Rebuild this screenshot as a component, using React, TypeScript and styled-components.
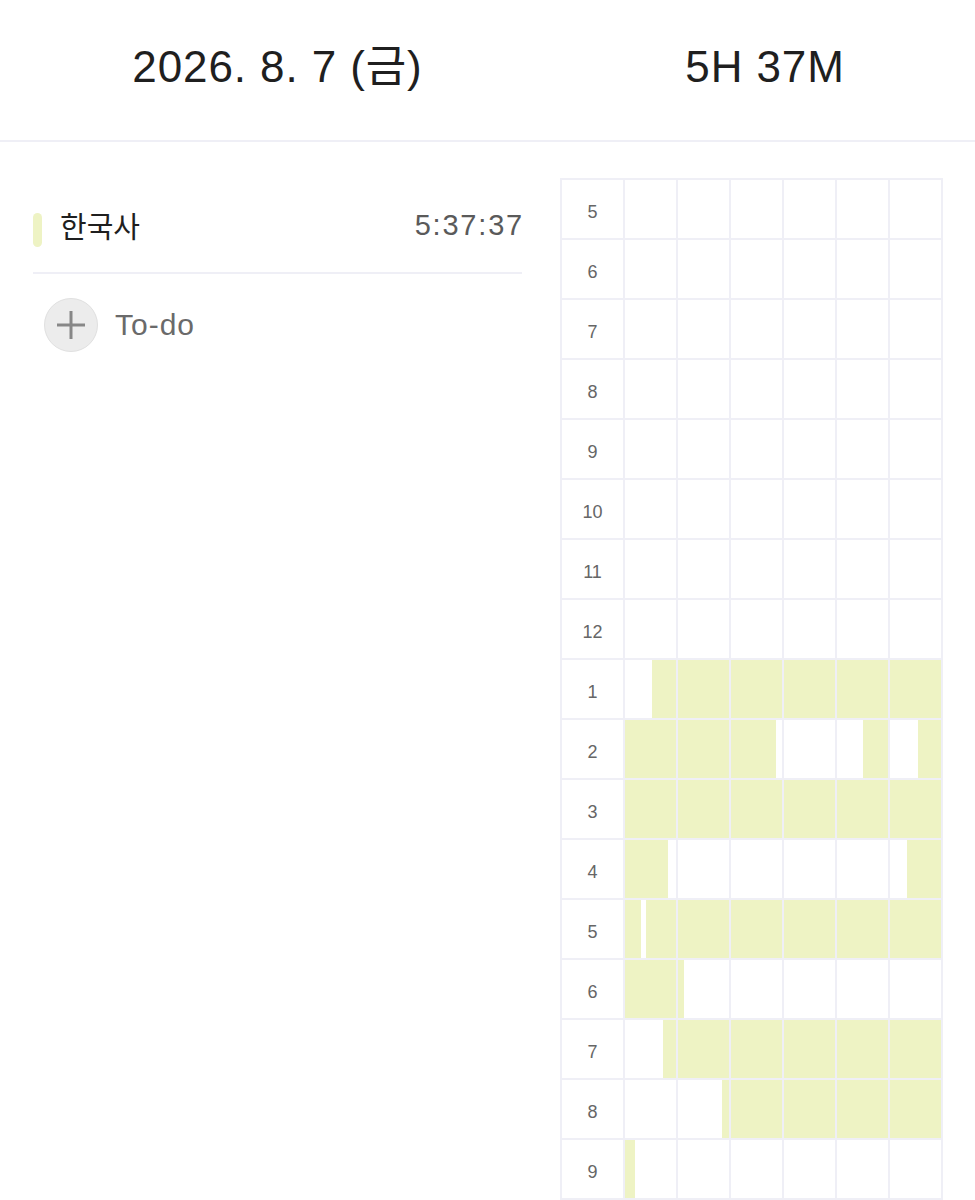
import React from 'react';
import styled, { createGlobalStyle } from 'styled-components';

const GlobalStyle = createGlobalStyle`
  body {
    margin: 0;
    background: #ffffff;
    font-family: 'Liberation Sans', 'Noto Sans CJK KR', sans-serif;
    color: #222222;
  }
`;

const LINE = '#efeff6';
const FILL = '#eef3c4';

const Page = styled.div`
  width: 975px;
  height: 1200px;
  overflow: hidden;
`;

const Header = styled.header`
  display: flex;
  align-items: baseline;
  box-sizing: border-box;
  height: 142px;
  padding-top: 42px;
  border-bottom: 2px solid ${LINE};
`;

const HeaderCell = styled.div<{ width?: number }>`
  width: ${({ width }) => (width ? `${width}px` : 'auto')};
  flex: ${({ width }) => (width ? 'none' : '1')};
  text-align: center;
  font-size: 44px;
  line-height: 50px;
  letter-spacing: 0.9px;
  color: #1f1f1f;
`;

const Body = styled.main`
  display: flex;
  padding-top: 36px;
`;

const LeftPane = styled.section`
  width: 489px;
  padding: 0 33px;
`;

const SubjectRow = styled.div`
  display: flex;
  align-items: center;
  height: 94px;
  border-bottom: 2px solid ${LINE};
`;

const ColorBar = styled.span<{ color: string }>`
  width: 9px;
  height: 34px;
  margin-top: 10px;
  border-radius: 5px;
  background: ${({ color }) => color};
  margin-right: 18px;
`;

const SubjectName = styled.span`
  flex: 1;
  font-family: 'Noto Sans CJK KR', sans-serif;
  font-size: 29px;
  color: #1f1f1f;
`;

const SubjectTime = styled.span`
  font-size: 29px;
  letter-spacing: 1.8px;
  margin-right: -2px;
  color: #5a5a5a;
`;

const TodoRow = styled.div`
  display: flex;
  align-items: center;
  gap: 17px;
  padding: 24px 0 0 11px;
`;

const AddCircle = styled.span`
  display: flex;
  align-items: center;
  justify-content: center;
  width: 52px;
  height: 52px;
  border-radius: 50%;
  background: #ececec;
  border: 1px solid #e0e0e0;
`;

const TodoLabel = styled.span`
  font-size: 30px;
  letter-spacing: 1px;
  color: #6a6a6a;
`;

const Timeline = styled.div`
  display: grid;
  grid-template-columns: 61px repeat(6, 51px);
  grid-auto-rows: 58px;
  gap: 2px;
  padding: 2px;
  margin-left: 5px;
  background: ${LINE};
  align-self: flex-start;
`;

const HourLabel = styled.div`
  display: flex;
  align-items: center;
  justify-content: center;
  padding-top: 7px;
  background: #ffffff;
  font-size: 18px;
  color: #666666;
`;

const Cell = styled.div`
  display: flex;
  background: #ffffff;
`;

const Segment = styled.span<{ filled: boolean }>`
  height: 100%;
  flex: none;
  background: ${({ filled }) => (filled ? FILL : 'transparent')};
`;

const hours = [5, 6, 7, 8, 9, 10, 11, 12, 1, 2, 3, 4, 5, 6, 7, 8, 9];

// study sessions per row, minutes from the start of the hour
const sessions: Record<number, [number, number][]> = {
  8: [[5.3, 60]],
  9: [[0, 28.8], [45.1, 50], [55.5, 60]],
  10: [[0, 60]],
  11: [[0, 8.4], [53.3, 60]],
  12: [[0, 3.1], [4.1, 60]],
  13: [[0, 11.2]],
  14: [[7.5, 60]],
  15: [[18.6, 60]],
  16: [[0, 2]],
};

const cellSegments = (row: number, col: number) => {
  const start = col * 10;
  const end = start + 10;
  const parts: { filled: boolean; width: number }[] = [];
  let cursor = start;
  (sessions[row] || []).forEach(([s, e]) => {
    const a = Math.max(s, start);
    const b = Math.min(e, end);
    if (b <= a) return;
    if (a > cursor) parts.push({ filled: false, width: a - cursor });
    parts.push({ filled: true, width: b - a });
    cursor = b;
  });
  return parts;
};

const PlusIcon = () => (
  <svg width="30" height="30" viewBox="0 0 30 30">
    <path d="M15 1v28M1 15h28" stroke="#878787" strokeWidth="3" />
  </svg>
);

const App = () => {
  return (
    <Page>
      <GlobalStyle />
      <Header>
        <HeaderCell width={555}>2026. 8. 7 (금)</HeaderCell>
        <HeaderCell>5H 37M</HeaderCell>
      </Header>
      <Body>
        <LeftPane>
          <SubjectRow>
            <ColorBar color={FILL} />
            <SubjectName>한국사</SubjectName>
            <SubjectTime>5:37:37</SubjectTime>
          </SubjectRow>
          <TodoRow>
            <AddCircle>
              <PlusIcon />
            </AddCircle>
            <TodoLabel>To-do</TodoLabel>
          </TodoRow>
        </LeftPane>
        <Timeline>
          {hours.map((hour, row) => (
            <React.Fragment key={row}>
              <HourLabel>{hour}</HourLabel>
              {[0, 1, 2, 3, 4, 5].map((col) => (
                <Cell key={col}>
                  {cellSegments(row, col).map((seg, i) => (
                    <Segment
                      key={i}
                      filled={seg.filled}
                      style={{ width: `${seg.width * 10}%` }}
                    />
                  ))}
                </Cell>
              ))}
            </React.Fragment>
          ))}
        </Timeline>
      </Body>
    </Page>
  );
};

export default App;
